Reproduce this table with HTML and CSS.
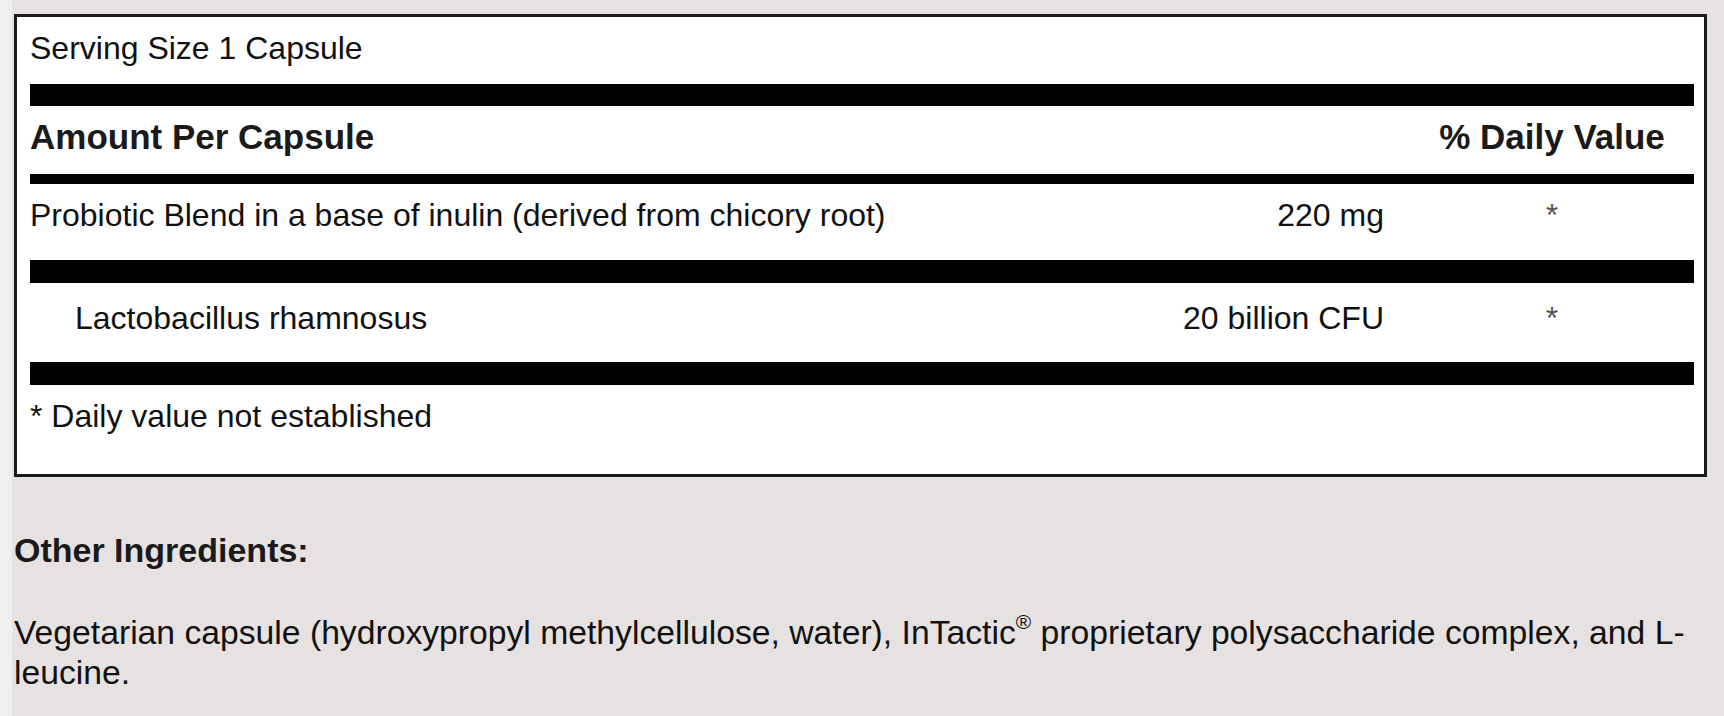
FILE: index.html
```html
<!DOCTYPE html>
<html lang="en">
<head>
<meta charset="utf-8">
<title>Supplement Facts</title>
<link rel="stylesheet" href="styles.css">
</head>
<body>
<main class="page">
  <section class="facts">
    <div class="serving">Serving Size 1 Capsule</div>
    <div class="bar bar-thick bar-first"></div>
    <div class="row head">
      <span class="name">Amount Per Capsule</span>
      <span class="dv">% Daily Value</span>
    </div>
    <div class="bar bar-thin"></div>
    <div class="row item item-first">
      <span class="name">Probiotic Blend in a base of inulin (derived from chicory root)</span>
      <span class="amount">220 mg</span>
      <span class="dv star">*</span>
    </div>
    <div class="bar bar-thick bar-mid"></div>
    <div class="row item item-second">
      <span class="name indent">Lactobacillus rhamnosus</span>
      <span class="amount">20 billion CFU</span>
      <span class="dv star">*</span>
    </div>
    <div class="bar bar-thick bar-last"></div>
    <div class="footnote">* Daily value not established</div>
  </section>
  <h2 class="other-title">Other Ingredients:</h2>
  <p class="other-text">Vegetarian capsule (hydroxypropyl methylcellulose, water), InTactic<span class="reg">®</span> proprietary polysaccharide complex, and L-leucine.</p>
</main>
</body>
</html>
```

FILE: styles.css
```css
html, body {
  margin: 0;
  padding: 0;
}

body {
  background: linear-gradient(to right, #f0efef 0, #f0efef 12px, #e7e2e2 12px, #e7e2e2 100%);
  font-family: "Liberation Sans", Arial, sans-serif;
  color: #111;
  height: 716px;
  overflow: hidden;
}

.page {
  padding: 14px 17px 0 14px;
}

.facts {
  background: #fff;
  border: 3px solid #1a1a1a;
  padding: 13px 10px 39px 13px;
}

.serving {
  font-size: 32px;
  line-height: 37px;
}

.bar {
  background: #000;
}

.bar-thick {
  height: 23px;
}

.bar-first {
  margin-top: 17px;
  height: 22px;
}

.bar-thin {
  height: 10px;
  margin-top: 17px;
}

.bar-mid {
  margin-top: 26px;
}

.bar-last {
  margin-top: 25px;
}

.row {
  display: flex;
  align-items: baseline;
}

.row .name {
  flex: 1;
}

.head {
  margin-top: 11px;
  font-size: 35px;
  line-height: 40px;
  font-weight: bold;
  color: #1a1a1a;
}

.item {
  font-size: 32px;
  line-height: 37px;
}

.item-first {
  margin-top: 13px;
}

.item-second {
  margin-top: 17px;
}

.indent {
  padding-left: 45px;
}

.amount {
  text-align: right;
}

.dv {
  width: 226px;
  margin-left: 55px;
  margin-right: 29px;
  text-align: center;
  white-space: nowrap;
}

.star {
  color: #555;
}

.footnote {
  margin-top: 13px;
  font-size: 32px;
  line-height: 37px;
}

.other-title {
  margin: 53px 0 0 0;
  font-size: 34px;
  line-height: 40px;
  font-weight: bold;
  color: #1a1a1a;
}

.other-text {
  margin: 42px 0 0 0;
  font-size: 33.7px;
  line-height: 40px;
  color: #111;
}

.reg {
  font-size: 0.62em;
  line-height: 1;
  vertical-align: top;
}
```
